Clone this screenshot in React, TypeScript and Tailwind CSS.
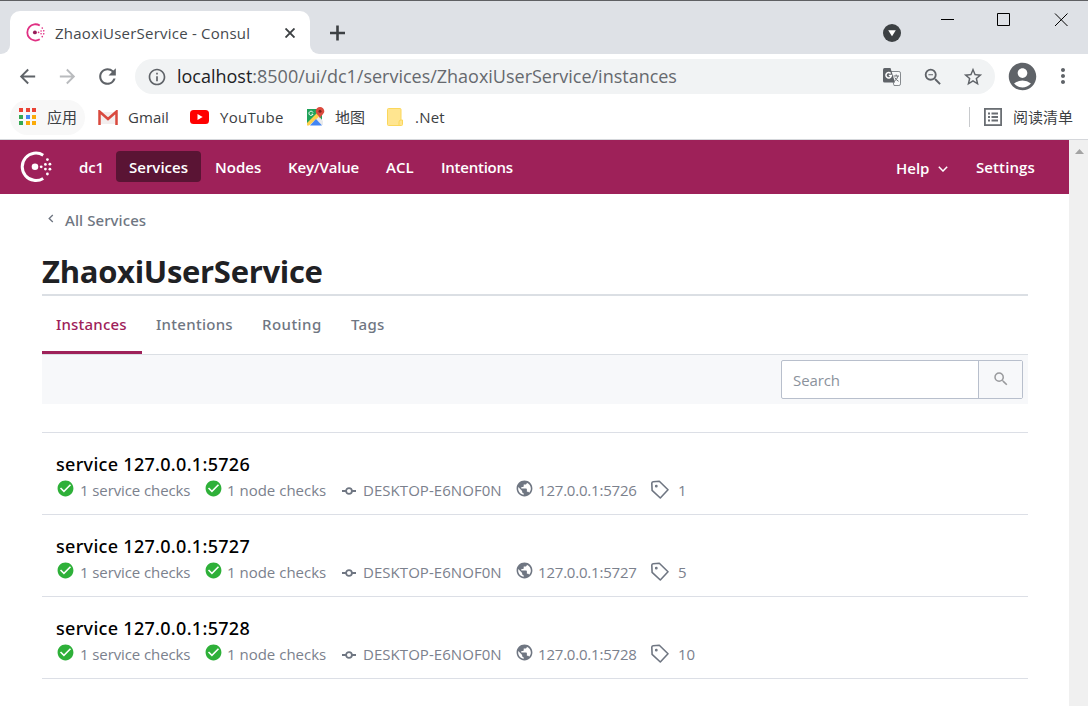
import React from "react";
import {
  MdAccountCircle,
  MdArrowBack,
  MdArrowForward,
  MdCheckCircle,
  MdInfoOutline,
  MdMoreVert,
  MdPublic,
  MdRefresh,
  MdSearch,
  MdStarBorder,
  MdZoomOut,
} from "react-icons/md";

function ConsulMark({ className, dark }: { className: string; dark?: string }) {
  return (
    <svg viewBox="0 0 32 32" className={className} fill="currentColor">
      <path
        d="M23.2 4.2A13.7 13.7 0 1 0 23.2 27.4"
        fill="none"
        stroke="currentColor"
        strokeWidth="3"
      />
      <circle cx="15" cy="15.8" r="3.3" fill={dark ?? "currentColor"} />
      <circle cx="21.2" cy="15.8" r="1.4" />
      <circle cx="25.4" cy="13.4" r="1.4" />
      <circle cx="25.4" cy="18.1" r="1.4" />
      <circle cx="27.4" cy="8.6" r="1.4" />
      <circle cx="29.9" cy="13.2" r="1.4" />
      <circle cx="29.9" cy="18.2" r="1.4" />
      <circle cx="27.4" cy="23" r="1.4" />
    </svg>
  );
}

function TitleBar() {
  return (
    <div className="flex h-[54px] border-t border-[#5f6063] bg-[#dee1e6]">
      <div className="flex h-full w-[10px] items-end bg-white">
        <div className="h-full w-full rounded-br-[9px] bg-[#dee1e6]" />
      </div>
      <div className="w-[300px] bg-[#dee1e6] pt-[10px]">
        <div className="flex h-[43px] items-center rounded-t-[10px] bg-white pl-[16px]">
          <ConsulMark className="h-[19px] w-[19px] text-[#e03083]" dark="#961d59" />
          <span className="ml-[10px] w-[230px] whitespace-nowrap pt-[2px] text-[15px] tracking-[0.22px] text-[#45494d]">
            ZhaoxiUserService - Consul
          </span>
          <svg viewBox="0 0 10 10" className="h-[10px] w-[10px]" fill="none" stroke="#3c4043" strokeWidth="1.9">
            <path d="M.5.500l9 9M9.500.500l-9 9" />
          </svg>
        </div>
      </div>
      <div className="w-[10px] bg-white">
        <div className="h-full w-full rounded-bl-[9px] bg-[#dee1e6]" />
      </div>
      <svg viewBox="0 0 16 16" className="ml-[9px] mt-[24px] h-4 w-4 text-[#3c4043]" fill="none" stroke="currentColor" strokeWidth="2.6">
        <path d="M8.5 .5v15M1 8h15" />
      </svg>
      <div className="flex-1" />
      <svg viewBox="0 0 18 18" className="mt-[23px] h-[18px] w-[18px]">
        <circle cx="9" cy="9" r="9" fill="#3c4043" />
        <path d="M5.2 6.3h7.6L9 12.3z" fill="#fff" />
      </svg>
      <svg viewBox="0 0 129 16" className="ml-[40px] mr-[18px] mt-[11px] h-4 w-[129px]" fill="none" stroke="#000">
        <path d="M0 7.5h13" />
        <path d="M56.5 1.5h12v12h-12z" />
        <path d="M114 1.500l12.500 12.500M126.500 1.500L114 14" />
      </svg>
    </div>
  );
}

function TranslateIcon() {
  return (
    <svg viewBox="0 0 18 18" className="h-[18px] w-[18px]">
      <path d="M7.5 3.500h8.400q1.600 0 1.600 1.600v10.800q0 1.600-1.600 1.600H11z" fill="#f8f9fa" stroke="#85898d" />
      <path d="M1.500 0h6l4.500 14.500H1.500Q0 14.500 0 13V1.500Q0 0 1.500 0z" fill="#5f6368" />
      <path d="M7.600 5.400A2.700 2.700 0 1 0 8.300 7.600H5.800" fill="none" stroke="#fff" strokeWidth="1.500" />
      <path d="M10.500 8h5.500M13.200 6.500V8M15 8q-.8 3.500-3.700 5.200M11.800 9.600q1.400 2.600 3.800 3.700" fill="none" stroke="#6f7377" />
    </svg>
  );
}

function Toolbar() {
  return (
    <div className="flex h-[43px] items-center bg-white pl-[16px] text-[#5f6368]">
      <MdArrowBack className="mt-px h-[23px] w-[23px]" />
      <MdArrowForward className="ml-[17px] mt-px h-[23px] w-[23px] text-[#b9bbbe]" />
      <MdRefresh className="ml-[16px] mt-[2px] h-[25px] w-[25px]" />
      <div className="ml-[15px] mt-[2px] flex h-[35px] w-[860px] items-center rounded-full bg-[#f1f3f4] pl-[12px]">
        <MdInfoOutline className="h-5 w-5" />
        <span className="ml-[10px] w-[706px] whitespace-nowrap pb-px text-[18px] tracking-[-0.01px] text-[#66696e]">
          <span className="text-[#202124]">localhost</span>
          :8500/ui/dc1/services/ZhaoxiUserService/instances
        </span>
        <TranslateIcon />
        <MdZoomOut className="ml-[21px] h-[22px] w-[22px]" />
        <MdStarBorder className="ml-[18px] h-[22px] w-[22px]" />
      </div>
      <MdAccountCircle className="ml-[11px] mt-px h-[33px] w-[33px]" />
      <MdMoreVert className="ml-[12px] mt-px h-[24px] w-[24px]" />
    </div>
  );
}

function AppsIcon() {
  const colors = ["#ea4335", "#ea4335", "#ea4335", "#34a853", "#4285f4", "#fbab09", "#34a853", "#fbab09", "#fbab09"];
  return (
    <div className="-mt-px grid w-[17px] grid-cols-3 gap-[2.5px]">
      {colors.map((c, i) => (
        <span key={i} className="h-[4px] w-[4px]" style={{ backgroundColor: c }} />
      ))}
    </div>
  );
}

function BookmarksBar() {
  return (
    <div className="flex h-[43px] items-center border-b border-[#d5d7db] bg-white pb-[2px] pl-[10px] text-[15px] text-[#3c4043]">
      <div className="flex h-[35px] w-[75px] items-center rounded-full bg-[#f8f8f8] pl-[9px]">
        <AppsIcon />
        <span className="ml-[11px] w-[32px] whitespace-nowrap">应用</span>
      </div>
      <svg viewBox="0 0 20 15" className="ml-[13px] h-[15px] w-5">
        <path d="M2 2h16v12H2z" fill="#f3eeee" />
        <path d="M1.500 15V1.500L10 9l8.500-7.500V15" fill="none" stroke="#d9493e" strokeWidth="2.500" />
      </svg>
      <span className="ml-[10px] w-[62px] whitespace-nowrap tracking-[0.05px]">Gmail</span>
      <svg viewBox="0 0 19 14" className="h-[14px] w-[19px]">
        <rect width="19" height="14" rx="3.500" fill="#f00" />
        <path d="M7.500 4l5.200 3-5.200 3z" fill="#fff" />
      </svg>
      <span className="ml-[11px] w-[86px] whitespace-nowrap tracking-[0.3px]">YouTube</span>
      <svg viewBox="0 0 19 19" className="-mt-[2px] h-[19px] w-[19px]">
        <path d="M1 2h15v16H2L1 17z" fill="#1fa25a" />
        <path d="M1 17L11 7l6 7v4H2z" fill="#e9eaec" />
        <path d="M1 16L13 4l3 3L3 18.500H1z" fill="#fdd04c" />
        <path d="M4 18.500L10 12l6 6.500z" fill="#4285f4" />
        <path d="M7 5.500A2.100 2.100 0 1 0 7 7.200H5.500" fill="none" stroke="#fff" strokeWidth="1" />
        <path d="M14 0a4.300 4.300 0 0 1 4.300 4.300c0 2.700-3.300 4-4.300 7.200-1-3.200-4.300-4.500-4.300-7.200A4.300 4.300 0 0 1 14 0z" fill="#dc4b3e" />
        <circle cx="14" cy="4.300" r="1.500" fill="#7e241f" />
      </svg>
      <span className="ml-[10px] w-[52px] whitespace-nowrap">地图</span>
      <svg viewBox="0 0 16 18" className="h-[18px] w-4" stroke="#fbd75b">
        <path d="M.5 1.500q0-1 1-1h11.500q1 0 1 1v10.500h1.500v4.500q0 1-1 1H1.500q-1 0-1-1z" fill="#ffe590" />
        <path d="M14 12q-2 0-2 2v3.500" fill="none" />
      </svg>
      <span className="ml-[12px] whitespace-nowrap tracking-[0.2px]">.Net</span>
      <div className="flex-1" />
      <div className="h-5 w-px bg-[#c8cacd]" />
      <svg viewBox="0 0 18 18" className="-mt-px ml-[14px] h-[18px] w-[18px]" fill="none" stroke="#6a6e73" strokeWidth="1.800">
        <rect x=".9" y=".9" width="16.200" height="16.200" />
        <path d="M4 5.500h2M4 9h2M4 12.500h2M7.500 5.500H14M7.500 9H14M7.500 12.500H14" />
      </svg>
      <span className="ml-[11px] mr-[15px] whitespace-nowrap">阅读清单</span>
    </div>
  );
}

function NavBar() {
  return (
    <nav className="flex h-[54px] items-center bg-[#9e2159] pl-[20px] text-[15px] font-semibold text-white">
      <ConsulMark className="h-8 w-8" />
      <span className="ml-[27px] w-[37px] whitespace-nowrap tracking-[-0.2px]">dc1</span>
      <span className="-mt-[2px] flex h-[31px] w-[85px] items-center whitespace-nowrap rounded-[4px] bg-[#5a1434] pl-[13px] pt-[2px]">Services</span>
      <span className="ml-[14px] w-[73px] whitespace-nowrap">Nodes</span>
      <span className="w-[98px] whitespace-nowrap tracking-[-0.16px]">Key/Value</span>
      <span className="w-[55px] whitespace-nowrap">ACL</span>
      <span className="whitespace-nowrap tracking-[-0.25px]">Intentions</span>
      <div className="flex-1" />
      <span className="w-[42px] whitespace-nowrap pt-[2px]">Help</span>
      <svg viewBox="0 0 10 6" className="mt-[3px] h-[6px] w-[10px]" fill="none" stroke="currentColor" strokeWidth="1.500">
        <path d="M.8.8L5 5 9.200.8" />
      </svg>
      <span className="ml-[28px] w-[93px] whitespace-nowrap tracking-[0.1px]">Settings</span>
    </nav>
  );
}

function CommitIcon() {
  return (
    <svg viewBox="0 0 14 8" className="mt-px h-2 w-[14px]" fill="none" stroke="#6f7682" strokeWidth="1.800">
      <circle cx="7" cy="4" r="2.900" />
      <path d="M0 4h4M10 4h4" />
    </svg>
  );
}

function TagIcon() {
  return (
    <svg viewBox="0 0 19 19" className="-mt-[2px] h-[19px] w-[19px]" fill="none" stroke="#6f7682" strokeWidth="1.600" strokeLinejoin="round">
      <path d="M1.800 3.200q0-1.300 1.300-1.500l6.200-.5 8.700 8.600-7.700 8.200-8.200-7.600z" />
      <circle cx="6.300" cy="6.200" r=".6" fill="#6f7682" />
    </svg>
  );
}

function Instance({ port, tags }: { port: number; tags: number }) {
  return (
    <li className="flex h-[82px] flex-col border-b border-[#dcdfe6] pl-[14px] pt-[18px]">
      <div className="h-[26px] whitespace-nowrap font-['Noto_Sans'] text-[18px] font-medium leading-[26px] tracking-[0.3px] text-black">
        service 127.0.0.1:{port}
      </div>
      <div className="flex h-[26px] items-center whitespace-nowrap text-[15px] text-[#7b818d]">
        <MdCheckCircle className="-mt-[3px] h-[19px] w-[19px] text-[#2eb039]" />
        <span className="ml-[5px] w-[124px] tracking-[-0.1px]">1 service checks</span>
        <MdCheckCircle className="-mt-[3px] h-[19px] w-[19px] text-[#2eb039]" />
        <span className="ml-[4px] w-[115px]">1 node checks</span>
        <CommitIcon />
        <span className="ml-[7px] w-[152px] tracking-[0.05px]">DESKTOP-E6NOF0N</span>
        <MdPublic className="-mt-[3px] h-[19px] w-[19px] text-[#6f7682]" />
        <span className="ml-[4px] w-[112px] tracking-[-0.2px]">127.0.0.1:{port}</span>
        <TagIcon />
        <span className="ml-[9px]">{tags}</span>
      </div>
    </li>
  );
}

function Content() {
  return (
    <main className="pl-[42px] pr-[41px]">
      <div className="flex h-[52px] items-center font-['Noto_Sans'] text-[15px] font-medium text-[#6f7682]">
        <svg viewBox="0 0 6 10" className="-mt-[4px] ml-[6px] h-[9px] w-[6px]" fill="none" stroke="currentColor" strokeWidth="1.500">
          <path d="M5 1L1 5l4 4" />
        </svg>
        <span className="ml-[11px] whitespace-nowrap tracking-[0.08px]">All Services</span>
      </div>
      <h1 className="h-[50px] whitespace-nowrap border-b-2 border-[#dbdfe4] text-[31px] font-bold leading-[50px] tracking-[-0.3px] text-[#1f2124]">
        ZhaoxiUserService
      </h1>
      <div className="flex h-[59px] border-b border-[#dbdfe4] font-['Noto_Sans'] text-[15px] font-medium leading-[57px] text-[#6f7682]">
        <span className="h-[58px] w-[100px] whitespace-nowrap border-b-3 border-[#9e2159] pl-[14px] tracking-[0.2px] text-[#9e2159]">Instances</span>
        <span className="ml-[14px] w-[106px] whitespace-nowrap tracking-[0.28px]">Intentions</span>
        <span className="w-[89px] whitespace-nowrap tracking-[0.45px]">Routing</span>
        <span className="whitespace-nowrap tracking-[0.3px]">Tags</span>
      </div>
      <div className="flex h-[49px] justify-end bg-[#f7f8fa] pr-[5px] pt-[5px]">
        <div className="flex h-[39px] w-[242px] items-center rounded-[2px] border border-[#b8bfcc] bg-white">
          <span className="flex-1 whitespace-nowrap pl-[11px] pt-[2px] text-[15px] tracking-[-0.1px] text-[#8b929c]">Search</span>
          <span className="flex h-full w-[44px] items-center justify-center border-l border-[#b8bfcc] bg-[#f7f8fa] pb-[2px]">
            <MdSearch className="h-[18px] w-[18px] text-[#999a9d]" />
          </span>
        </div>
      </div>
      <ul className="mt-[28px] border-t border-[#dcdfe6]">
        <Instance port={5726} tags={1} />
        <Instance port={5727} tags={5} />
        <Instance port={5728} tags={10} />
      </ul>
    </main>
  );
}

export default function App() {
  return (
    <div className="flex h-[706px] w-[1088px] flex-col overflow-hidden bg-white font-['Open_Sans','Noto_Sans_CJK_SC',sans-serif]">
      <TitleBar />
      <Toolbar />
      <BookmarksBar />
      <div className="flex flex-1">
        <div className="flex-1">
          <NavBar />
          <Content />
        </div>
        <div className="flex w-[19px] justify-center bg-[#f0f0f0] pl-[2px] pt-[9px]">
          <svg viewBox="0 0 9 5" className="h-[5px] w-[9px]">
            <path d="M4.500 0L9 5H0z" fill="#a3a3a3" />
          </svg>
        </div>
      </div>
    </div>
  );
}
